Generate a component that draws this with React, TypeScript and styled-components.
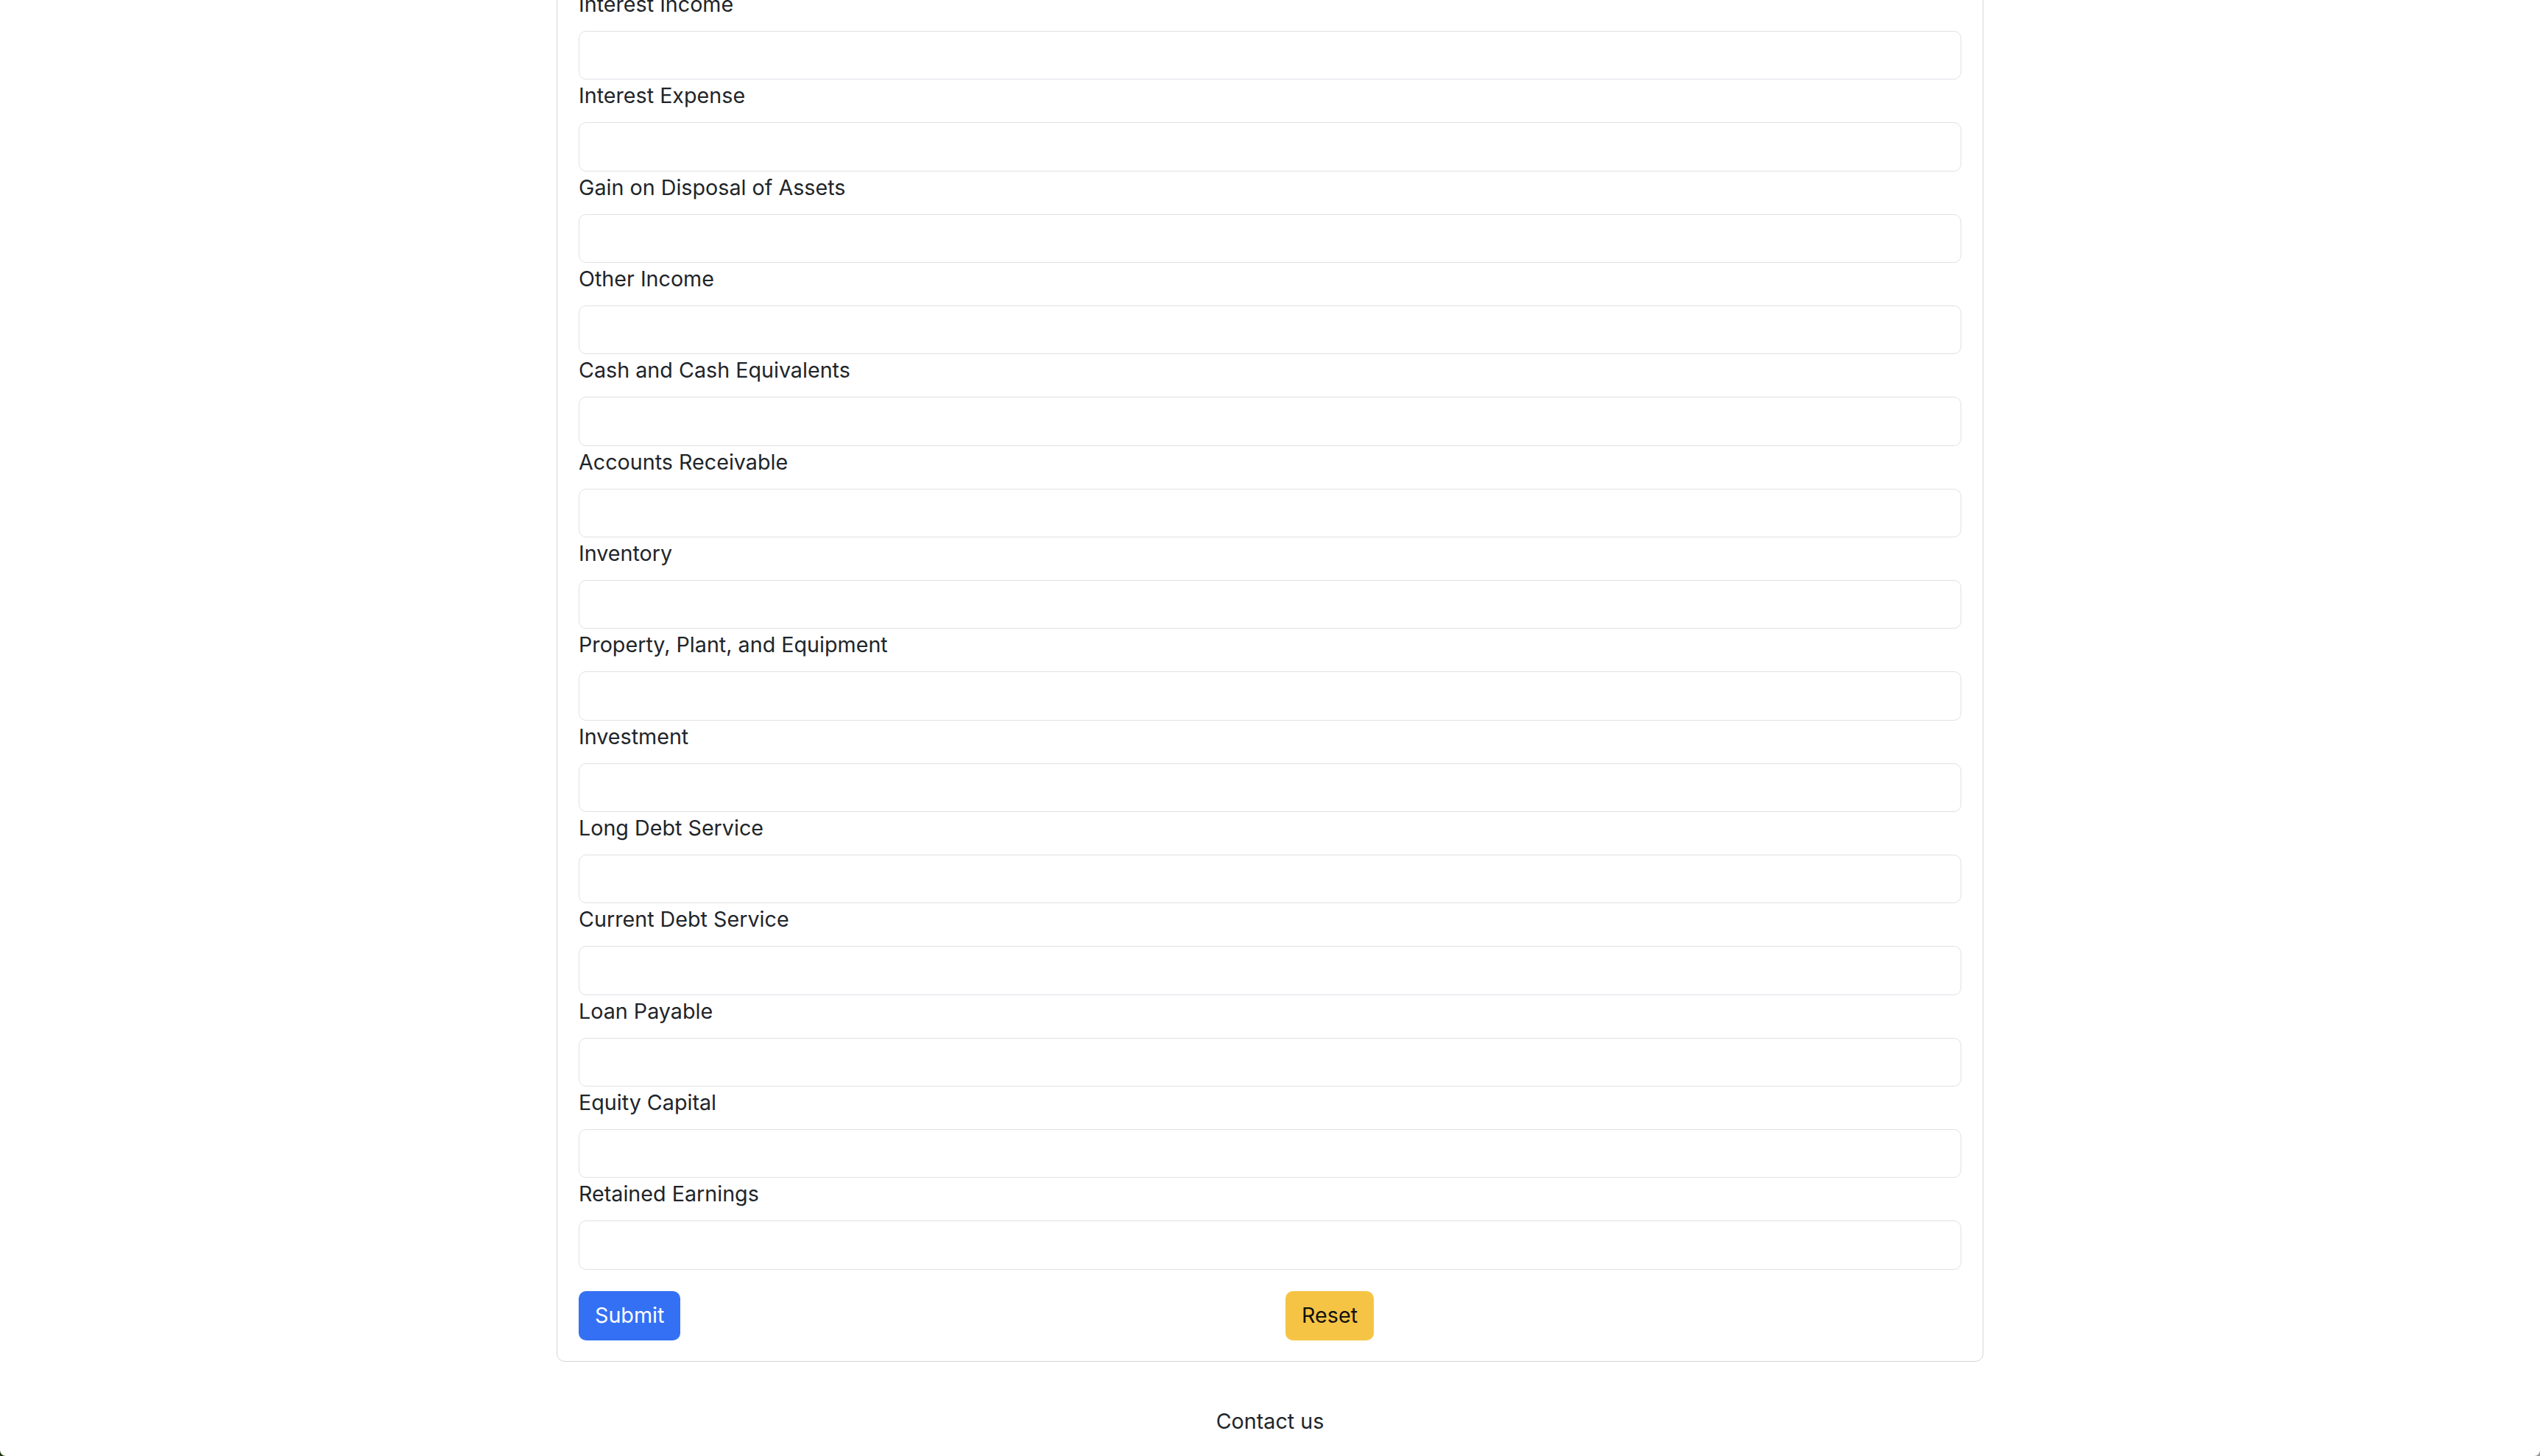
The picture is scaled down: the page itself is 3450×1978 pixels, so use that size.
import React from "react";
import styled, { createGlobalStyle } from "styled-components";

const GlobalStyle = createGlobalStyle`
  *, *::before, *::after { box-sizing: border-box; }
  html, body { margin: 0; padding: 0; background: #ffffff; }
  body {
    font-family: Inter, "Noto Sans", "Liberation Sans", sans-serif;
    color: #212529;
    font-size: 28.7px;
    line-height: 1.5;
    overflow: hidden;
  }
`;

const Page = styled.div`
  width: 100%;
  min-height: 1978px;
  display: flex;
  flex-direction: column;
  align-items: center;
`;

const Card = styled.form`
  width: 1938px;
  margin-top: -45px;
  padding: 28px 29px;
  border: 1.5px solid #d6d6d8;
  border-radius: 11px;
  background: #ffffff;
  display: flex;
  flex-direction: column;
`;

const Field = styled.div`
  display: flex;
  flex-direction: column;
`;

const Label = styled.label`
  font-size: 28.7px;
  line-height: 43px;
  margin-bottom: 15px;
  color: #212529;
  font-weight: 400;
`;

const Input = styled.input`
  width: 100%;
  height: 66.33px;
  border: 1.5px solid #e0e1e6;
  border-radius: 10px;
  background: #ffffff;
  padding: 0 21px;
  font-family: inherit;
  font-size: 28px;
  color: #212529;
  outline: none;
`;

const ButtonRow = styled.div`
  display: grid;
  grid-template-columns: 1fr 1fr;
  column-gap: 42px;
  margin-top: 29px;
`;

const Cell = styled.div`
  display: flex;
  align-items: flex-start;
`;

const Button = styled.button<{ $variant: "primary" | "warning" }>`
  height: 67px;
  padding: 0 22px;
  border: none;
  border-radius: 10px;
  font-family: inherit;
  font-size: 28.7px;
  line-height: 1;
  cursor: pointer;
  background: ${(p) => (p.$variant === "primary" ? "#3470f4" : "#f6c445")};
  color: ${(p) => (p.$variant === "primary" ? "#ffffff" : "#111111")};
`;

const Footer = styled.footer`
  margin-top: 60px;
  font-size: 28.7px;
  line-height: 42px;
  color: #212529;
  text-align: center;
`;

const Corner = styled.div<{ $side: "left" | "right"; $color: string }>`
  position: fixed;
  bottom: 0;
  ${(p) => (p.$side === "left" ? "left: 0;" : "right: 0;")}
  width: 8px;
  height: 8px;
  background: ${(p) => p.$color};
  clip-path: ${(p) =>
    p.$side === "left"
      ? "path('M0 0 A8 8 0 0 0 8 8 L0 8 Z')"
      : "path('M8 0 A8 8 0 0 1 0 8 L8 8 Z')"};
`;

const fields = [
  "Interest Income",
  "Interest Expense",
  "Gain on Disposal of Assets",
  "Other Income",
  "Cash and Cash Equivalents",
  "Accounts Receivable",
  "Inventory",
  "Property, Plant, and Equipment",
  "Investment",
  "Long Debt Service",
  "Current Debt Service",
  "Loan Payable",
  "Equity Capital",
  "Retained Earnings",
];

export default function App() {
  return (
    <>
      <GlobalStyle />
      <Page>
        <Card onSubmit={(e) => e.preventDefault()}>
          {fields.map((f, i) => (
            <Field key={f}>
              <Label htmlFor={`f${i}`}>{f}</Label>
              <Input id={`f${i}`} type="text" />
            </Field>
          ))}
          <ButtonRow>
            <Cell>
              <Button type="submit" $variant="primary">Submit</Button>
            </Cell>
            <Cell>
              <Button type="reset" $variant="warning">Reset</Button>
            </Cell>
          </ButtonRow>
        </Card>
        <Footer>Contact us</Footer>
      </Page>
      <Corner $side="left" $color="#1f3a12" />
      <Corner $side="right" $color="#9a9a9a" />
    </>
  );
}
